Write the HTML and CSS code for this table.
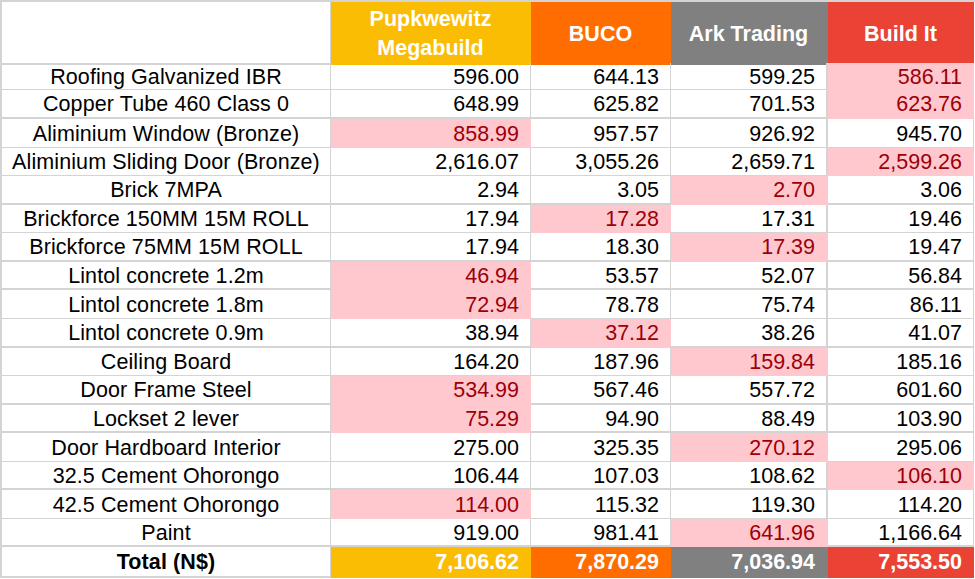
FILE: index.html
```html
<!DOCTYPE html>
<html>
<head>
<meta charset="utf-8">
<link rel="stylesheet" href="styles.css">
</head>
<body>
<div class="sheet">
  <div class="row head thick">
    <div class="cell label"></div>
    <div class="cell hdr gold">Pupkwewitz<br>Megabuild</div>
    <div class="cell hdr orange">BUCO</div>
    <div class="cell hdr gray">Ark Trading</div>
    <div class="cell hdr red">Build It</div>
  </div>
  <div class="row h27">
    <div class="cell label">Roofing Galvanized IBR</div>
    <div class="cell">596.00</div><div class="cell">644.13</div><div class="cell">599.25</div><div class="cell low">586.11</div>
  </div>
  <div class="row h29 thick">
    <div class="cell label">Copper Tube 460 Class 0</div>
    <div class="cell">648.99</div><div class="cell">625.82</div><div class="cell">701.53</div><div class="cell low">623.76</div>
  </div>
  <div class="row h29">
    <div class="cell label">Aliminium Window (Bronze)</div>
    <div class="cell low">858.99</div><div class="cell">957.57</div><div class="cell">926.92</div><div class="cell">945.70</div>
  </div>
  <div class="row h28">
    <div class="cell label">Aliminium Sliding Door (Bronze)</div>
    <div class="cell">2,616.07</div><div class="cell">3,055.26</div><div class="cell">2,659.71</div><div class="cell low">2,599.26</div>
  </div>
  <div class="row h29 thick">
    <div class="cell label">Brick 7MPA</div>
    <div class="cell">2.94</div><div class="cell">3.05</div><div class="cell low">2.70</div><div class="cell">3.06</div>
  </div>
  <div class="row h28">
    <div class="cell label">Brickforce 150MM 15M ROLL</div>
    <div class="cell">17.94</div><div class="cell low">17.28</div><div class="cell">17.31</div><div class="cell">19.46</div>
  </div>
  <div class="row h29 thick">
    <div class="cell label">Brickforce 75MM 15M ROLL</div>
    <div class="cell">17.94</div><div class="cell">18.30</div><div class="cell low">17.39</div><div class="cell">19.47</div>
  </div>
  <div class="row h28 thick">
    <div class="cell label">Lintol concrete 1.2m</div>
    <div class="cell low">46.94</div><div class="cell">53.57</div><div class="cell">52.07</div><div class="cell">56.84</div>
  </div>
  <div class="row h29">
    <div class="cell label">Lintol concrete 1.8m</div>
    <div class="cell low">72.94</div><div class="cell">78.78</div><div class="cell">75.74</div><div class="cell">86.11</div>
  </div>
  <div class="row h29 thick">
    <div class="cell label">Lintol concrete 0.9m</div>
    <div class="cell">38.94</div><div class="cell low">37.12</div><div class="cell">38.26</div><div class="cell">41.07</div>
  </div>
  <div class="row h28">
    <div class="cell label">Ceiling Board</div>
    <div class="cell">164.20</div><div class="cell">187.96</div><div class="cell low">159.84</div><div class="cell">185.16</div>
  </div>
  <div class="row h29 thick">
    <div class="cell label">Door Frame Steel</div>
    <div class="cell low">534.99</div><div class="cell">567.46</div><div class="cell">557.72</div><div class="cell">601.60</div>
  </div>
  <div class="row h28 thick">
    <div class="cell label">Lockset 2 lever</div>
    <div class="cell low">75.29</div><div class="cell">94.90</div><div class="cell">88.49</div><div class="cell">103.90</div>
  </div>
  <div class="row h29">
    <div class="cell label">Door Hardboard Interior</div>
    <div class="cell">275.00</div><div class="cell">325.35</div><div class="cell low">270.12</div><div class="cell">295.06</div>
  </div>
  <div class="row h28 thick">
    <div class="cell label">32.5 Cement Ohorongo</div>
    <div class="cell">106.44</div><div class="cell">107.03</div><div class="cell">108.62</div><div class="cell low">106.10</div>
  </div>
  <div class="row h29">
    <div class="cell label">42.5 Cement Ohorongo</div>
    <div class="cell low">114.00</div><div class="cell">115.32</div><div class="cell">119.30</div><div class="cell">114.20</div>
  </div>
  <div class="row h28 thick">
    <div class="cell label">Paint</div>
    <div class="cell">919.00</div><div class="cell">981.41</div><div class="cell low">641.96</div><div class="cell">1,166.64</div>
  </div>
  <div class="row total thick">
    <div class="cell label bold">Total (N$)</div>
    <div class="cell tot gold">7,106.62</div><div class="cell tot orange">7,870.29</div><div class="cell tot gray">7,036.94</div><div class="cell tot red">7,553.50</div>
  </div>
</div>
</body>
</html>
```
FILE: styles.css
```css
html, body {
  margin: 0;
  padding: 0;
  background: #ffffff;
}

.sheet {
  width: 974px;
  border-top: 2px solid #d4d4d4;
  border-left: 2px solid #d4d4d4;
  font-family: "Liberation Sans", Arial, sans-serif;
  font-size: 21.5px;
  color: #000000;
}

.row {
  display: grid;
  grid-template-columns: 329px 200px 140px 157px 146px;
}

.head { height: 61px; }
.h27 { height: 27px; }
.h28 { height: 28px; }
.h29 { height: 29px; }
.total { height: 31px; }

.cell {
  box-sizing: border-box;
  border-right: 1px solid #d4d4d4;
  border-bottom: 1px solid #d4d4d4;
  display: flex;
  align-items: center;
  justify-content: flex-end;
  padding-top: 3px;
  padding-right: 11px;
  line-height: 1;
  white-space: nowrap;
}

.cell:nth-child(4) {
  border-right-width: 2px;
}

.thick .cell {
  border-bottom-width: 2px;
}

.label {
  justify-content: center;
  padding-right: 0;
  letter-spacing: 0.1px;
}

.bold {
  font-weight: bold;
}

.hdr {
  justify-content: center;
  padding-right: 0;
  text-align: center;
  line-height: 29px;
  font-weight: bold;
  color: #ffffff;
}

.tot {
  font-weight: bold;
  color: #ffffff;
}

.low {
  background: #ffc7ce;
  color: #9c0006;
  border-color: #ffc7ce;
}

.gold {
  background: #fbbc04;
  border-color: #fbbc04;
}

.orange {
  background: #ff6d01;
  border-color: #ff6d01;
}

.gray {
  background: #808080;
  border-color: #808080;
}

.red {
  background: #ea4335;
  border-color: #ea4335;
}
```
